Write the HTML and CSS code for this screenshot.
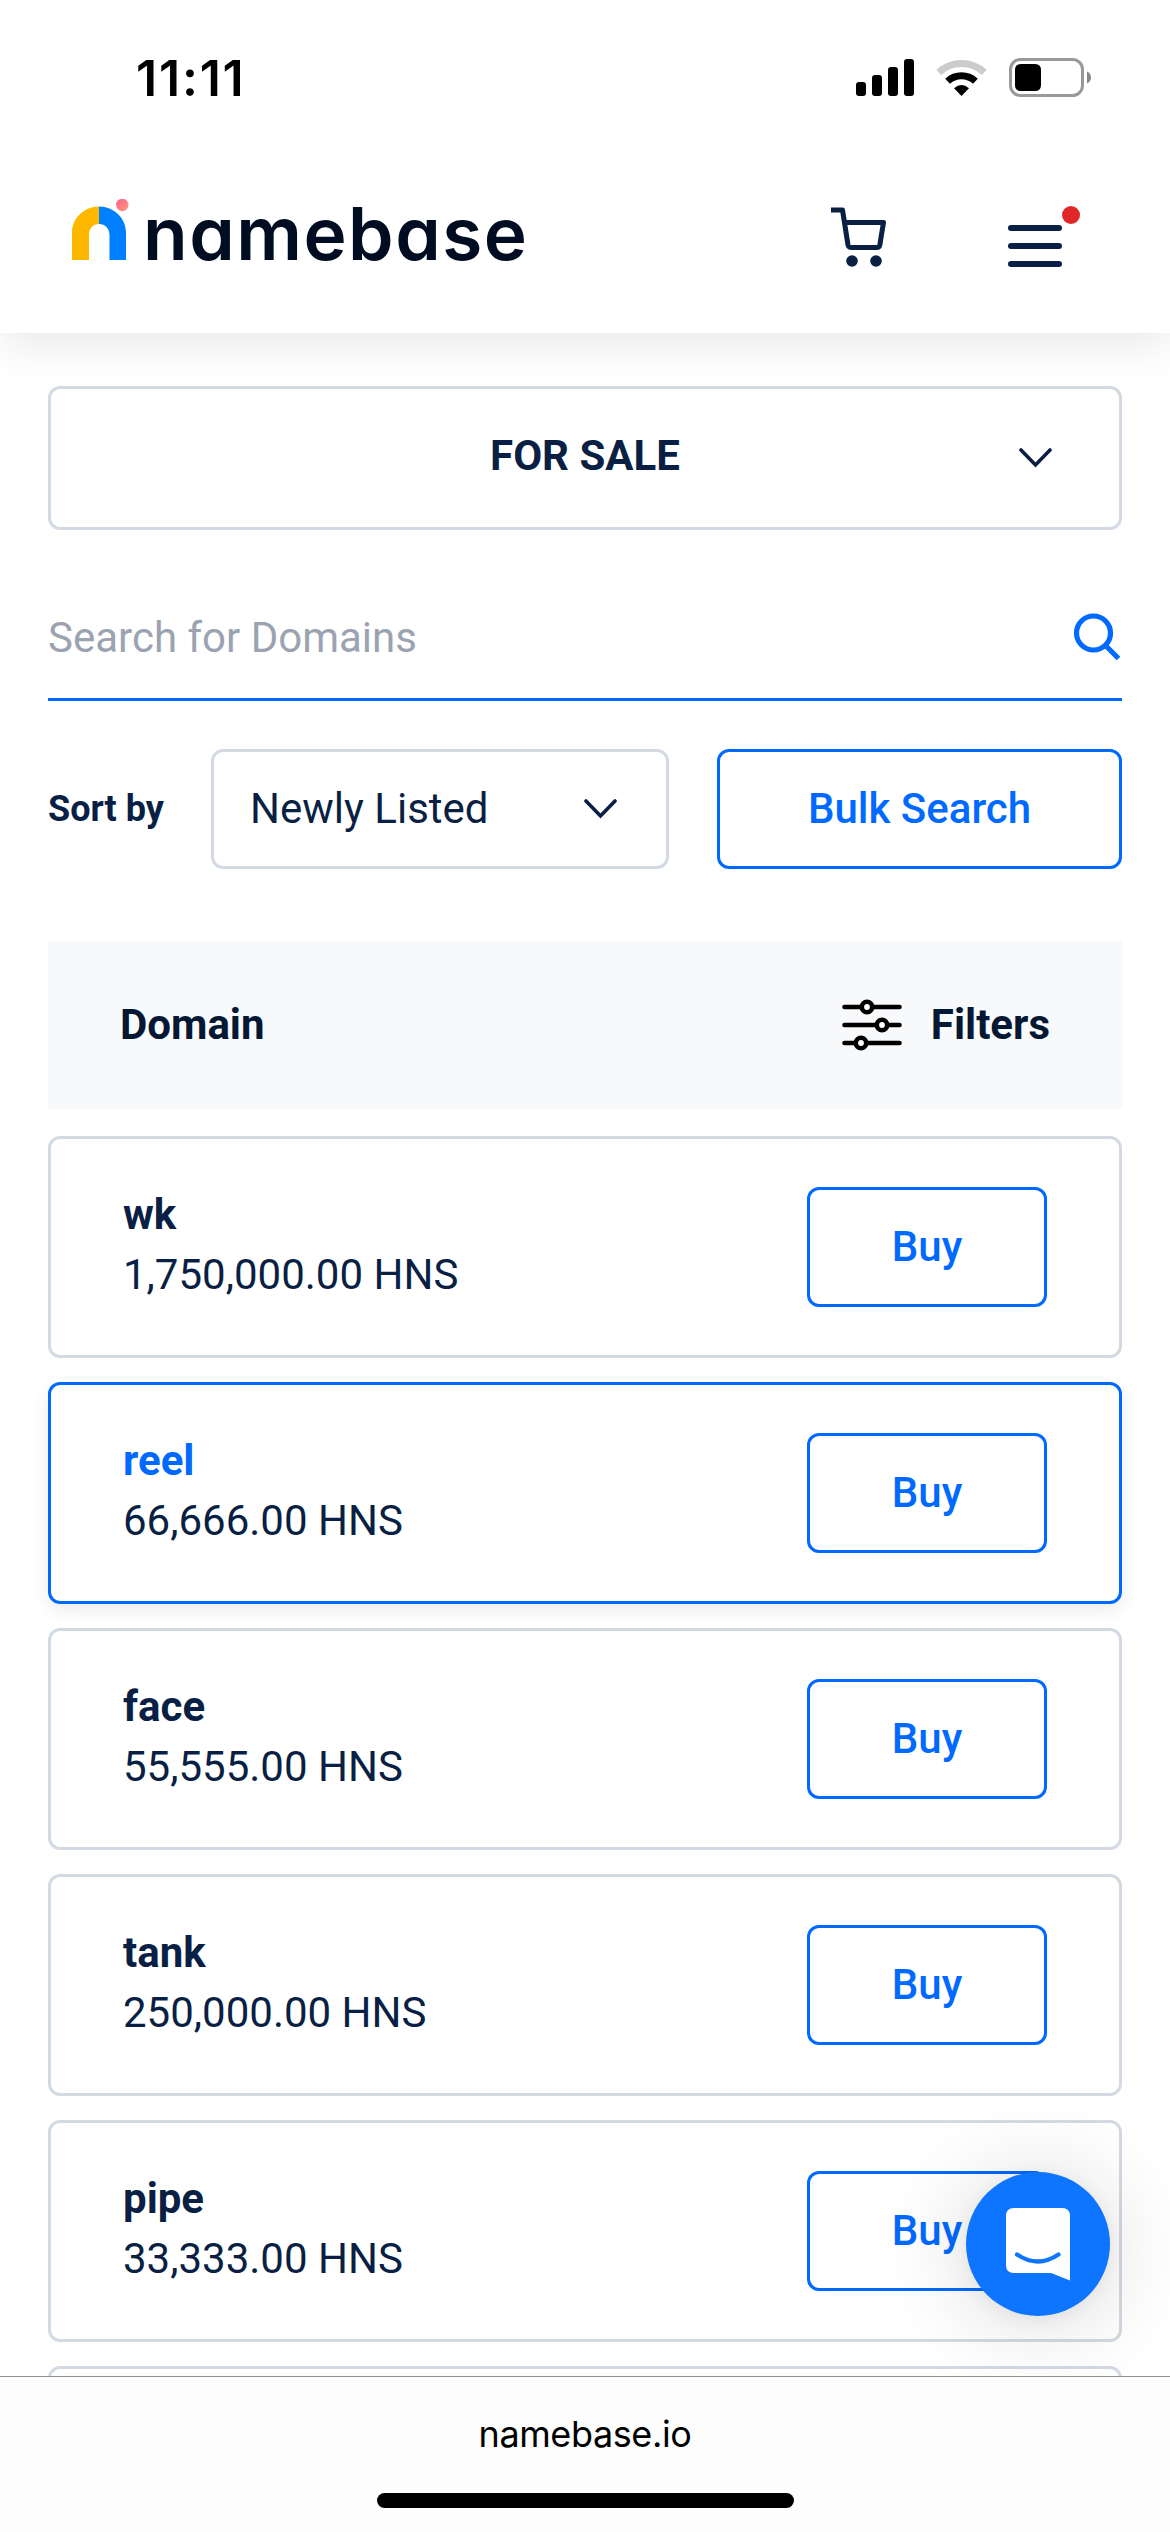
FILE: index.html
```html
<!DOCTYPE html>
<html lang="en">
<head>
  <meta charset="UTF-8">
  <meta name="viewport" content="width=device-width, initial-scale=1.0">
  <title>Namebase</title>
  <link rel="stylesheet" href="styles.css">
</head>
<body>
  <div class="status-bar">
    <span class="time">11:11</span>
    <svg class="status-icons" width="236" height="40" viewBox="856 58 236 40">
      <rect x="856" y="82" width="10" height="14" rx="3"/>
      <rect x="872" y="75" width="10" height="21" rx="3"/>
      <rect x="888" y="67" width="10" height="29" rx="3"/>
      <rect x="904" y="59" width="10" height="37" rx="3"/>
      <path d="M938.8 72.4a33.5 33.5 0 0 1 45.4 0" fill="none" stroke="#ccc" stroke-width="7"/>
      <path d="M947.6 81.3a20.5 20.5 0 0 1 27.800 0" fill="none" stroke="#000" stroke-width="7"/>
      <path d="M954 88.3q7.5-6.6 15 0l-7.5 7.7z"/>
      <rect x="1010.5" y="59.5" width="72" height="36" rx="10" fill="none" stroke="#999" stroke-width="3"/>
      <rect x="1015" y="64" width="26" height="27" rx="5.5"/>
      <path d="M1087 71.5q4 1.8 4 6t-4 6z" fill="#888"/>
    </svg>
  </div>

  <header class="header">
    <a class="logo">
      <svg width="58" height="62" viewBox="72 199 58 62">
        <defs>
          <linearGradient id="dot" x1="0" y1="0" x2="1" y2="1">
            <stop offset="0" stop-color="#ff5c8a"/>
            <stop offset="1" stop-color="#ffa07a"/>
          </linearGradient>
        </defs>
        <path d="M72 260v-27c0-15 12-26.500 27-26.500V224c-6 0-10 4.500-10 11v25z" fill="#ffb800"/>
        <path d="M126 260v-27c0-15-12-26.500-27-26.500V224c6 0 10.500 4.500 10.500 11v25z" fill="#0080ff"/>
        <circle cx="122.300" cy="205" r="6.200" fill="url(#dot)"/>
      </svg>
      <span class="logo-text">namebase</span>
    </a>
    <svg class="cart" width="56" height="62" viewBox="831 206 56 62">
      <path d="M831 210h11.500l5.500 35q.6 2.500 3.500 2.500h25q2.800 0 3.300-2.500l3.700-22.500h-39" fill="none" stroke="#0a1f44" stroke-width="5" stroke-linejoin="round"/>
      <circle cx="852" cy="261" r="5.800" fill="#0a1f44"/>
      <circle cx="876" cy="261" r="5.800" fill="#0a1f44"/>
    </svg>
    <div class="menu">
      <span></span><span></span><span></span>
      <i class="menu-badge"></i>
    </div>
  </header>

  <main class="main">
    <div class="tab-select">
      FOR SALE
      <svg class="chevron" width="33" height="20" viewBox="0 0 33 20"><path d="M2 2l14.500 15L31 2"/></svg>
    </div>

    <div class="search">
      <span>Search for Domains</span>
      <svg width="48" height="48" viewBox="0 0 48 48"><circle cx="19.500" cy="20" r="17"/><path d="M31.500 32.500l13 13"/></svg>
    </div>

    <div class="sort-row">
      <label>Sort by</label>
      <div class="sort-select">
        Newly Listed
        <svg class="chevron" width="33" height="20" viewBox="0 0 33 20"><path d="M2 2l14.500 15L31 2"/></svg>
      </div>
      <button class="btn bulk">Bulk Search</button>
    </div>

    <div class="table-head">
      <span>Domain</span>
      <div class="filters">
        <svg width="60" height="54" viewBox="0 0 60 54">
          <path d="M2.500 9h55M2.500 27h55M2.500 45h55"/>
          <circle cx="25" cy="9" r="5.200"/>
          <circle cx="40" cy="27" r="5.200"/>
          <circle cx="19" cy="45" r="5.200"/>
        </svg>
        <span>Filters</span>
      </div>
    </div>

    <div class="list">
      <div class="card">
        <div class="info"><b>wk</b><span>1,750,000.00 HNS</span></div>
        <button class="btn">Buy</button>
      </div>
      <div class="card active">
        <div class="info"><b>reel</b><span>66,666.00 HNS</span></div>
        <button class="btn">Buy</button>
      </div>
      <div class="card">
        <div class="info"><b>face</b><span>55,555.00 HNS</span></div>
        <button class="btn">Buy</button>
      </div>
      <div class="card">
        <div class="info"><b>tank</b><span>250,000.00 HNS</span></div>
        <button class="btn">Buy</button>
      </div>
      <div class="card">
        <div class="info"><b>pipe</b><span>33,333.00 HNS</span></div>
        <button class="btn">Buy</button>
      </div>
      <div class="card"></div>
    </div>

    <div class="chat">
      <svg width="64" height="73" viewBox="0 0 64 73">
        <path d="M8 0h48q8 0 8 8v64.500L45 65H8q-8 0-8-8V8q0-8 8-8z" fill="#fff"/>
        <path d="M11 46.500q20.500 14 41.500 0" fill="none" stroke="#0d75ff" stroke-width="4.200" stroke-linecap="round"/>
      </svg>
    </div>
  </main>

  <footer class="browser-bar">
    <span>namebase.io</span>
    <div class="home-indicator"></div>
  </footer>
</body>
</html>
```
FILE: styles.css
```css
* {
  box-sizing: border-box;
}
body {
  margin: 0;
  height: 2532px;
  display: flex;
  flex-direction: column;
  overflow: hidden;
  background: #fff;
  color: #0a1f44;
  font-family: Roboto, sans-serif;
  font-size: 42px;
}
svg {
  display: block;
  flex: none;
}

/* top */
.status-bar {
  height: 140px;
  flex: none;
  display: flex;
  justify-content: space-between;
  align-items: flex-start;
  padding: 58px 78px 0 136px;
  background: #fff;
  position: relative;
  z-index: 2;
}
.time {
  font-family: Inter, sans-serif;
  font-weight: 600;
  font-size: 50px;
  line-height: 40px;
  letter-spacing: 1.8px;
  color: #000;
}
.header {
  height: 193px;
  flex: none;
  display: flex;
  align-items: flex-start;
  padding: 59px 108px 0 72px;
  background: #fff;
  box-shadow: 0 12px 42px rgba(0, 0, 0, 0.09);
  position: relative;
  z-index: 1;
}
.logo {
  display: flex;
  gap: 13px;
  margin-right: auto;
}
.logo-text {
  margin-top: -1px;
  font-family: Inter, sans-serif;
  font-feature-settings: "cv11";
  font-weight: 600;
  font-size: 73px;
  line-height: 72px;
  letter-spacing: 1.5px;
  color: #000c21;
}
.cart {
  margin: 7px 121px 0 0;
}
.menu {
  width: 54px;
  display: flex;
  flex-direction: column;
  gap: 12px;
  margin-top: 26px;
  position: relative;
}
.menu span {
  height: 6px;
  border-radius: 3px;
  background: #0a1f44;
}
.menu-badge {
  position: absolute;
  top: -19px;
  right: -18px;
  width: 18px;
  height: 18px;
  border-radius: 50%;
  background: #e02626;
}

/* page */
.main {
  flex: 1;
  min-height: 0;
  padding: 53px 48px 0;
  overflow: hidden;
  position: relative;
}
.chevron {
  fill: none;
  stroke: #0a1f44;
  stroke-width: 3.6;
  stroke-linecap: round;
}
.tab-select {
  height: 144px;
  display: grid;
  grid-template-columns: 1fr auto 1fr;
  align-items: center;
  padding: 0 67px 6px;
  border: 3px solid #d3dae3;
  border-radius: 12px;
  font-weight: 700;
}
.tab-select::before {
  content: "";
}
.tab-select .chevron {
  justify-self: end;
  margin-top: 6px;
}
.search {
  height: 171px;
  display: flex;
  justify-content: space-between;
  align-items: flex-start;
  padding-top: 83px;
  border-bottom: 3px solid #0069ff;
  line-height: 50px;
  color: #9ba3b1;
}
.search svg {
  fill: none;
  stroke: #0069ff;
  stroke-width: 5.2;
}
.sort-row {
  display: flex;
  align-items: center;
  margin-top: 48px;
}
.sort-row label {
  width: 163px;
  padding-bottom: 1px;
  font-size: 36px;
  font-weight: 700;
}
.sort-select {
  width: 458px;
  height: 120px;
  display: flex;
  justify-content: space-between;
  align-items: center;
  padding: 0 49px 1px 36px;
  margin-right: 48px;
  border: 3px solid #d3dae3;
  border-radius: 12px;
}
.btn {
  width: 240px;
  height: 120px;
  padding: 0 0 1px;
  border: 3px solid #0069ff;
  border-radius: 12px;
  background: none;
  color: #0069ff;
  font: 500 42px Roboto, sans-serif;
}
.bulk {
  width: 405px;
}
.table-head {
  height: 168px;
  display: flex;
  justify-content: space-between;
  align-items: center;
  margin-top: 72px;
  padding: 0 72px;
  background: #f8f9fb;
  color: #041733;
  font-weight: 700;
}
.table-head span {
  padding-bottom: 2px;
}
.filters {
  display: flex;
  align-items: center;
  gap: 29px;
}
.filters svg {
  fill: #fff;
  stroke: #000;
  stroke-width: 4.6;
  stroke-linecap: round;
}

/* domains */
.list {
  display: flex;
  flex-direction: column;
  gap: 24px;
  margin-top: 27px;
}
.card {
  height: 222px;
  display: flex;
  justify-content: space-between;
  align-items: center;
  padding: 0 72px;
  border: 3px solid #d3dae3;
  border-radius: 12px;
}
.card.active {
  border-color: #0069ff;
  box-shadow: 0 6px 18px rgba(0, 0, 0, 0.08);
}
.card.active b {
  color: #0069ff;
}
.info {
  display: flex;
  flex-direction: column;
  padding-bottom: 5px;
  line-height: 60px;
}
.chat {
  position: absolute;
  top: 1839px;
  right: 60px;
  width: 144px;
  height: 144px;
  display: flex;
  justify-content: center;
  align-items: center;
  border-radius: 50%;
  background: #0d75ff;
  box-shadow: 0 3px 18px rgba(0, 0, 0, 0.06), 0 6px 96px rgba(0, 0, 0, 0.16);
}

/* bottom */
.browser-bar {
  height: 156px;
  flex: none;
  display: flex;
  flex-direction: column;
  align-items: center;
  border-top: 1px solid #8e9095;
  background: #fdfdfe;
  font-family: Inter, sans-serif;
  font-size: 36px;
  line-height: 44px;
  letter-spacing: -0.4px;
  color: #000;
  padding-top: 35px;
}
.home-indicator {
  width: 417px;
  height: 15px;
  margin-top: 37px;
  border-radius: 8px;
  background: #000;
}
```
